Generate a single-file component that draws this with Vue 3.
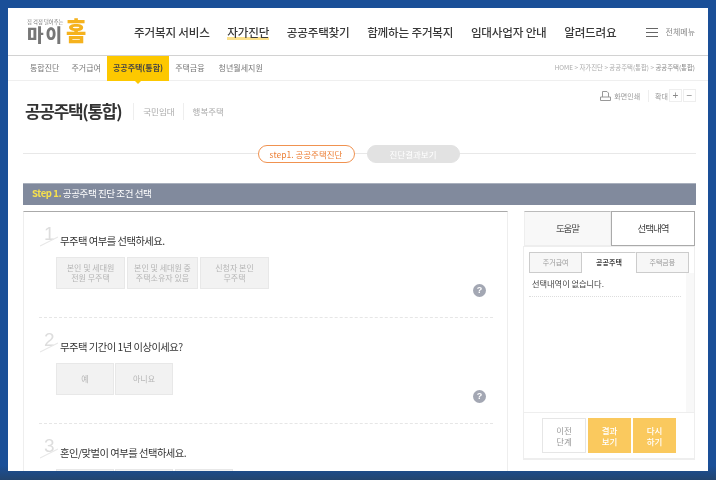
<script setup>
const navItems = ['주거복지 서비스', '자가진단', '공공주택찾기', '함께하는 주거복지', '임대사업자 안내', '알려드려요']
const subItems = ['통합진단', '주거급여', '공공주택(통합)', '주택금융', '청년월세지원']
const questions = [
  { n: 1, title: '무주택 여부를 선택하세요.', opts: [['본인 및 세대원', '전원 무주택'], ['본인 및 세대원 중', '주택소유자 있음'], ['신청자 본인', '무주택']], w: [69, 71, 69], gap: [0, 2, 2], help: true },
  { n: 2, title: '무주택 기간이 1년 이상이세요?', opts: [['예'], ['아니요']], w: [58, 58], gap: [0, 1], help: true },
  { n: 3, title: '혼인/맞벌이 여부를 선택하세요.', opts: [[], [], []], w: [58, 58, 58], gap: [0, 1, 2], help: false }
]
</script>

<template>
  <div class="screen">
    <div class="page">
      <header class="top">
        <div class="logo">
          <div class="logo-words">
            <span class="logo-small">집 걱정 덜어주는</span>
            <span class="logo-main">마이</span>
          </div>
          <span class="logo-home">홈</span>
        </div>
        <nav class="nav">
          <a v-for="(item, i) in navItems" :key="item" class="nav-item" :class="{ marked: i === 1 }">{{ item }}</a>
        </nav>
        <div class="all-menu">
          <svg width="12" height="9" viewBox="0 0 12 9"><path d="M0 .5h12M0 4.5h12M0 8.5h12" stroke="#666" fill="none"/></svg>
          <span>전체메뉴</span>
        </div>
      </header>

      <div class="sub">
        <div class="sub-tabs">
          <a v-for="(item, i) in subItems" :key="item" class="sub-tab" :class="{ on: i === 2 }">{{ item }}</a>
        </div>
        <div class="crumbs">HOME &gt; 자가진단 &gt; 공공주택(통합) &gt; <b>공공주택(통합)</b></div>
      </div>

      <div class="title-row">
        <div class="title-left">
          <h1>공공주택(통합)</h1>
          <span class="title-link">국민임대</span>
          <span class="title-link">행복주택</span>
        </div>
        <div class="tools">
          <svg width="11" height="10" viewBox="0 0 11 10"><path d="M2.5 6V.5h4.5l1.500 1.500V6M.5 9.500V6h10v3.500z" fill="none" stroke="#999"/></svg>
          <span class="tool-print">화면인쇄</span>
          <span class="tool-zoom">확대</span>
          <span class="tool-btn">+</span>
          <span class="tool-btn">−</span>
        </div>
      </div>

      <div class="steps">
        <span class="pill active">step1. 공공주택진단</span>
        <span class="pill off">진단결과보기</span>
      </div>

      <div class="bar"><b>Step 1.</b> 공공주택 진단 조건 선택</div>

      <div class="body">
        <section class="left">
          <div v-for="q in questions" :key="q.n" class="q">
            <div class="q-head">
              <span class="q-num">{{ q.n }}</span>
              <span class="q-title">{{ q.title }}</span>
            </div>
            <div class="q-row">
              <div class="opts">
                <button v-for="(o, i) in q.opts" :key="i" class="opt" :style="{ width: q.w[i] + 'px', marginLeft: q.gap[i] + 'px' }">
                  <span v-for="l in o" :key="l">{{ l }}</span>
                </button>
              </div>
              <span v-if="q.help" class="help">?</span>
            </div>
          </div>
        </section>

        <aside class="right">
          <div class="r-tabs">
            <span class="r-tab">도움말</span>
            <span class="r-tab on">선택내역</span>
          </div>
          <div class="r-box">
            <div class="r-sub">
              <span class="r-s">주거급여</span>
              <span class="r-s on">공공주택</span>
              <span class="r-s">주택금융</span>
            </div>
            <div class="r-content">
              <div class="r-list"><p>선택내역이 없습니다.</p></div>
              <div class="r-scroll"></div>
            </div>
            <div class="r-actions">
              <button class="act ghost"><span>이전</span><span>단계</span></button>
              <button class="act"><span>결과</span><span>보기</span></button>
              <button class="act"><span>다시</span><span>하기</span></button>
            </div>
          </div>
        </aside>
      </div>
    </div>
  </div>
</template>

<style>
html, body { margin: 0; overflow: hidden; }
</style>

<style scoped>
* { box-sizing: border-box; }
.screen {
  width: 716px; height: 480px; padding: 8px 8px 9px;
  background: linear-gradient(#1a4f98 97%, #23456f 100%);
  font-family: "Noto Sans CJK KR", "Noto Sans", sans-serif;
  color: #333; overflow: hidden;
}
.page { width: 700px; height: 463px; background: #fff; overflow: hidden; filter: blur(0.35px); }

.top { height: 48px; display: flex; align-items: flex-start; border-bottom: 1px solid #d2d2d2; position: relative; }
.logo { width: 126px; padding: 10px 0 0 19px; display: flex; align-items: flex-start; }
.logo-words { display: flex; flex-direction: column; width: 39px; }
.logo-small { font-size: 5.300px; line-height: 7px; margin-top: 1px; color: #777; white-space: nowrap; }
.logo-main { font-size: 18px; line-height: 17px; font-weight: 900; color: #777; letter-spacing: 2px; }
.logo-home { font-size: 22px; line-height: 24px; font-weight: 900; color: #f5b21e; transform: scaleY(1.2); transform-origin: top; margin-top: -3px; }
.nav { display: flex; gap: 17.600px; padding-top: 15px; }
.nav-item { font-size: 11.600px; line-height: 18px; font-weight: 500; color: #3a3a3a; white-space: nowrap; letter-spacing: -0.2px; }
.nav-item.marked { background: linear-gradient(transparent 76%, #fbe08a 76%, #fbe08a 94%, transparent 94%); }
.all-menu { margin-left: auto; padding: 18px 13px 0 0; display: flex; align-items: center; gap: 8px; font-size: 8px; line-height: 12px; color: #888; }

.sub { height: 25px; display: flex; justify-content: space-between; border-bottom: 1px solid #efefef; }
.sub-tabs { display: flex; padding-left: 16px; }
.sub-tab { padding: 0 6px; font-size: 8px; line-height: 24px; color: #777; white-space: nowrap; }
.sub-tab:last-child { margin-left: 2px; }
.sub-tab.on { height: 25px; background: #fdc800; color: #444; font-weight: 700; position: relative; }
.sub-tab.on::after {
  content: ""; position: absolute; left: 50%; margin-left: -3px; top: 25px;
  border: 3px solid transparent; border-top-color: #fdc800; border-bottom: 0;
}
.crumbs { padding-right: 13px; font-size: 6.400px; line-height: 24px; color: #aaa; white-space: nowrap; }
.crumbs b { font-weight: 400; color: #888; }

.title-row { height: 64px; display: flex; justify-content: space-between; position: relative; }
.title-left { display: flex; align-items: center; padding: 0 0 0 17px; height: 60px; }
h1 { margin: 0 12px 0 0; font-size: 17px; line-height: 24px; font-weight: 700; color: #333; letter-spacing: -1.3px; white-space: nowrap; }
.title-link { height: 17px; border-left: 1px solid #eee; padding: 0 8px 0 9px; font-size: 8.500px; line-height: 17px; color: #aaa; white-space: nowrap; }
.tools { display: flex; align-items: center; padding: 7px 12px 0 0; height: 22px; font-size: 7px; color: #999; }
.tool-print { margin-left: 3px; padding-right: 8px; border-right: 1px solid #eee; line-height: 12px; }
.tool-zoom { margin: 0 0 0 6px; }
.tool-btn { width: 13px; height: 13px; border: 1px solid #eee; margin-left: 1px; text-align: center; font-size: 10px; line-height: 11px; color: #888; font-family: "Liberation Sans", sans-serif; }

.steps {
  height: 18px; margin: 0 12px 0 15px; display: flex; justify-content: center; gap: 12px; padding-right: 2px;
  background: linear-gradient(transparent 8.500px, #e8e8e8 8.500px, #e8e8e8 9.500px, transparent 9.500px);
}
.pill { height: 18px; border-radius: 9px; font-size: 8.500px; line-height: 16px; text-align: center; white-space: nowrap; }
.pill.active { width: 97px; border: 1px solid #f09250; background: #fff; color: #ec7f35; }
.pill.off { width: 93px; border: 1px solid #e2e2e2; background: #e2e2e2; color: #fff; }

.bar { height: 22px; margin: 20px 12px 0 15px; padding-left: 9px; background: #818a9d; border-top: 1px solid #a9b0bd; color: #fff; font-size: 9.500px; line-height: 19px; letter-spacing: -0.4px; white-space: nowrap; }
.bar b { color: #f7e14c; }

.body { margin: 6px 13px 0 15px; display: flex; justify-content: space-between; align-items: flex-start; }
.left { width: 485px; height: 260px; border-top: 1px solid #aaa; border-left: 1px solid #eee; border-right: 1px solid #eee; padding: 0 14px 0 15px; }
.q { height: 106px; padding-top: 19px; border-bottom: 1px dashed #e6e6e6; }
.q:last-child { border-bottom: 0; }
.q-head { height: 20px; margin-bottom: 6px; padding-left: 5px; display: flex; align-items: center; position: relative; }
.q-num { width: 16px; font-size: 19px; line-height: 20px; color: #ddd; margin-top: -14px; position: relative; font-family: "Liberation Sans", sans-serif; }
.q-num::after { content: ""; position: absolute; left: -5px; top: 17px; width: 20px; height: 1px; background: #e8e8e8; transform: rotate(-27deg); }
.q-title { font-size: 10.300px; line-height: 18px; color: #333; letter-spacing: -0.5px; white-space: nowrap; }
.q-row { display: flex; justify-content: space-between; align-items: flex-start; padding: 0 7px 0 17px; }
.opts { display: flex; }
.opt { height: 32px; padding: 0; background: #f2f2f2; border: 1px solid #e8e8e8; color: #b5b5b5; font: inherit; font-size: 8px; line-height: 10px; display: flex; flex-direction: column; align-items: center; justify-content: center; white-space: nowrap; }
.help { width: 13px; height: 13px; margin-top: 27px; border-radius: 50%; background: #a3a7b3; color: #fff; font-size: 9px; line-height: 13px; font-weight: 700; text-align: center; font-family: "Liberation Sans", sans-serif; }

.right { width: 172px; }
.r-tabs { height: 35px; display: flex; margin-left: 1px; }
.r-tab { flex: 1; background: #f8f8f8; border: 1px solid #eee; border-top-color: #bbb; font-size: 9.500px; line-height: 33px; letter-spacing: -1px; text-align: center; color: #555; }
.r-tab.on { flex: 0 0 84px; background: #fff; border: 1px solid #aaa; color: #444; }
.r-box { height: 214px; border: 1px solid #eee; border-bottom-width: 2px; display: flex; flex-direction: column; }
.r-sub { margin: 5px 5px 0; height: 21px; display: flex; flex: none; }
.r-s { flex: 1; border: 1px solid #ccc; background: #f7f7f7; font-size: 7px; line-height: 19px; text-align: center; color: #999; }
.r-s.on { background: #fff; border-color: #ccc #fff #fff; color: #444; font-weight: 700; }
.r-content { flex: 1; display: flex; min-height: 0; }
.r-list { flex: 1; padding: 0 5px; }
.r-list p { margin: 0; height: 24px; padding: 3px 3px 0; border-bottom: 1px dotted #ddd; font-size: 8.200px; line-height: 14px; color: #444; white-space: nowrap; }
.r-scroll { width: 8px; background: #f8f8f8; }
.r-actions { height: 46px; flex: none; padding: 5px 0 0 18px; border-top: 1px solid #eee; display: flex; gap: 2px; }
.act { width: 43px; height: 35px; padding: 0; border: 1px solid #fac95e; background: #fac95e; color: #fff; font: inherit; font-size: 8.500px; line-height: 11px; font-weight: 500; display: flex; flex-direction: column; align-items: center; justify-content: center; }
.act.ghost { width: 44px; background: #fff; border-color: #e6e6e6; color: #999; font-weight: 400; }
</style>
